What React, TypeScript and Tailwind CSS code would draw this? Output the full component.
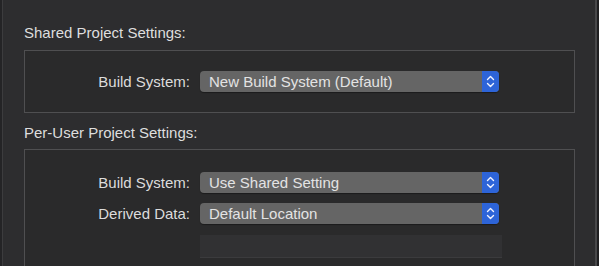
function Stepper() {
  return (
    <svg width="9" height="13" viewBox="0 0 9 13" fill="none">
      <path d="M1.5 4.5 L4.5 1.5 L7.5 4.5" stroke="#f2f4ff" strokeWidth="1.4" strokeLinecap="round" strokeLinejoin="round" />
      <path d="M1.5 8.5 L4.5 11.5 L7.5 8.5" stroke="#f2f4ff" strokeWidth="1.4" strokeLinecap="round" strokeLinejoin="round" />
    </svg>
  );
}

function Popup({ value }: { value: string }) {
  return (
    <div className="ml-[10px] w-[299px] h-[21px] flex rounded-[4px] overflow-hidden bg-[#656565] shadow-[0_1px_1px_rgba(0,0,0,0.35)]">
      <div className="flex-1 pl-[9px] leading-[21px] text-[#e3e3e3]">{value}</div>
      <div className="w-[17px] bg-[#2d64d8] flex items-center justify-center">
        <Stepper />
      </div>
    </div>
  );
}

function Row({ label, value }: { label: string; value: string }) {
  return (
    <div className="flex items-center">
      <div className="w-[165px] text-right text-[#dcdcdc] leading-[21px]">{label}</div>
      <Popup value={value} />
    </div>
  );
}

export default function App() {
  return (
    <div
      className="w-[599px] h-[266px] overflow-hidden flex bg-[#2d2d2f] text-[15px]"
      style={{ fontFamily: '"Liberation Sans", Arial, sans-serif' }}
    >
      <div className="w-[2px] bg-[#242426]" />
      <div className="w-[1px] bg-[#3c3c3e]" />

      <div className="flex-1 pl-[21px] pr-[20px]">
        {/* Shared */}
        <div className="mt-[24px] leading-[18px] text-[#dedede]">Shared Project Settings:</div>
        <div className="mt-[8px] border border-[#4f4f51] bg-[#2a2a2b] pt-[20px] pb-[20px]">
          <Row label="Build System:" value="New Build System (Default)" />
        </div>

        {/* Per-User */}
        <div className="mt-[11px] leading-[18px] text-[#dedede]">Per-User Project Settings:</div>
        <div className="mt-[7px] h-[140px] border border-[#4f4f51] bg-[#2a2a2b] pt-[22px] flex flex-col">
          <Row label="Build System:" value="Use Shared Setting" />
          <div className="h-[10px]" />
          <Row label="Derived Data:" value="Default Location" />
          <div className="h-[11px]" />
          <div className="flex">
            <div className="w-[175px]" />
            <div className="w-[302px] h-[23px] bg-[#313133] border-b border-[#3b3b3d]" />
          </div>
        </div>
      </div>

      <div className="w-[2px] bg-[#48484a]" />
      <div className="w-[2px] bg-[#1f1f21]" />
    </div>
  );
}
